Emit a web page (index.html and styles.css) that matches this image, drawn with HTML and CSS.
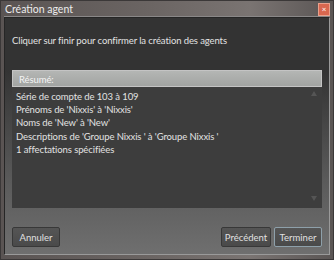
FILE: index.html
```html
<!DOCTYPE html>
<html lang="fr">
<head>
    <meta charset="UTF-8">
    <title>Création agent</title>
    <link rel="stylesheet" href="styles.css">
</head>
<body>
    <div class="window">
        <div class="titlebar">
            <span class="title">Création agent</span>
            <span class="close">&#215;</span>
        </div>
        <div class="content">
            <p class="intro">Cliquer sur finir pour confirmer la création des agents</p>

            <div class="summary">
                <div class="summary-head">Résumé:</div>
                <div class="summary-body">
                    <div class="rows">
                        <div>Série de compte de 103 à 109</div>
                        <div>Prénoms de 'Nixxis' à 'Nixxis'</div>
                        <div>Noms de 'New' à 'New'</div>
                        <div>Descriptions de 'Groupe Nixxis ' à 'Groupe Nixxis '</div>
                        <div>1 affectations spécifiées</div>
                    </div>
                    <div class="scroll">
                        <span class="arrow up"></span>
                        <span class="arrow down"></span>
                    </div>
                </div>
            </div>

            <div class="buttons">
                <button class="btn cancel">Annuler</button>
                <div class="right">
                    <button class="btn prev">Précédent</button>
                    <button class="btn default">Terminer</button>
                </div>
            </div>
        </div>
    </div>
</body>
</html>
```

FILE: styles.css
```css
html, body {
    margin: 0;
    padding: 0;
}
body {
    width: 334px;
    height: 260px;
    overflow: hidden;
    font-family: Lato, "Open Sans", sans-serif;
    font-size: 9.5px;
    letter-spacing: -0.1px;
    color: #e2e2e2;
    background: #3a3737;
}
.window {
    box-sizing: border-box;
    width: 334px;
    height: 260px;
    display: flex;
    flex-direction: column;
    padding: 0 3px 4px 3px;
    background: linear-gradient(90deg, #5a5453 0%, #6b6563 45%, #7a7472 75%, #5a5554 100%);
    border: 1px solid #3b3838;
}
.titlebar {
    height: 15px;
    display: flex;
    align-items: center;
    justify-content: space-between;
    border-bottom: 1px solid #8a8888;
}
.title {
    color: #ececec;
    font-size: 10.5px;
    letter-spacing: 0;
    padding-left: 1px;
}
.close {
    width: 10px;
    height: 11px;
    margin-top: 1px;
    background: #d8674f;
    border: 1px solid #e9a08c;
    color: #fff;
    font-size: 8px;
    line-height: 11px;
    text-align: center;
}
.content {
    flex: 1;
    display: flex;
    flex-direction: column;
    border: 1px solid #262626;
    border-right-color: #9a9a9a;
    border-bottom-color: #9a9a9a;
    background: linear-gradient(180deg, #333 0%, #333 22%, #5b5b5b 70%, #6f6f6f 100%);
}
.intro {
    margin: 0;
    padding: 17px 0 0 7px;
    height: 36px;
    line-height: 12px;
    box-sizing: border-box;
}
.summary {
    margin: 16px 7px 0 7px;
    height: 138px;
    display: flex;
    flex-direction: column;
    background: #3d3d3d;
}
.summary-head {
    height: 17px;
    line-height: 17px;
    padding-left: 6px;
    background: linear-gradient(180deg, #b4b6b4, #a2a4a2);
    border: 1px solid #c4c4c4;
    color: #f4f4f4;
    box-sizing: border-box;
}
.summary-body {
    flex: 1;
    display: flex;
}
.rows {
    flex: 1;
    padding: 3px 0 0 4px;
    line-height: 13.2px;
}
.scroll {
    width: 16px;
    display: flex;
    flex-direction: column;
    justify-content: space-between;
    align-items: center;
    padding: 4px 0 7px 0;
}
.arrow {
    width: 0;
    height: 0;
    border-left: 3px solid transparent;
    border-right: 3px solid transparent;
}
.arrow.up {
    border-bottom: 5px solid #555;
}
.arrow.down {
    border-top: 5px solid #555;
}
.buttons {
    display: flex;
    justify-content: space-between;
    margin: 19px 7px 0 7px;
}
.right {
    display: flex;
    gap: 3px;
}
.btn {
    height: 20px;
    padding: 0;
    font-family: Lato, "Open Sans", sans-serif;
    font-size: 9.5px;
    color: #e0e0e0;
    background: linear-gradient(180deg, #555, #4a4a4a);
    border: 1px solid #383838;
    border-radius: 2px;
}
.btn.cancel {
    width: 48px;
}
.btn.prev {
    width: 50px;
}
.btn.default {
    width: 48px;
    border-color: #8ea0aa;
}
```
